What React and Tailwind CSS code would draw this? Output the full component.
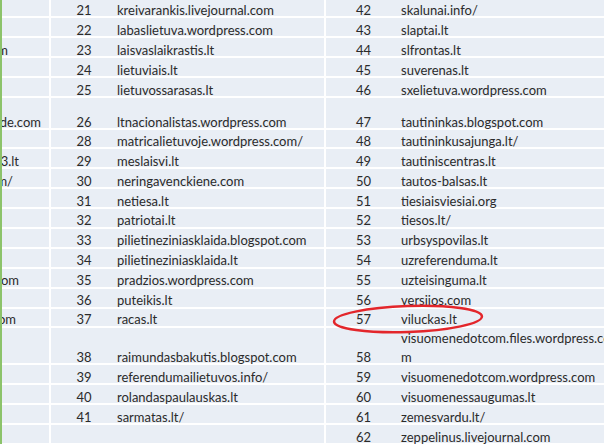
const rows = [
  { h: "h-[18px]", a: "", ap: "", b: "21", bt: "kreivarankis.livejournal.com", c: "42", ct: "skalunai.info/" },
  { h: "h-[20px]", a: "", ap: "", b: "22", bt: "labaslietuva.wordpress.com", c: "43", ct: "slaptai.lt" },
  { h: "h-[20px]", a: "m", ap: "pr-[41px]", b: "23", bt: "laisvaslaikrastis.lt", c: "44", ct: "slfrontas.lt" },
  { h: "h-[20px]", a: "", ap: "", b: "24", bt: "lietuviais.lt", c: "45", ct: "suverenas.lt" },
  { h: "h-[20px]", a: "", ap: "", b: "25", bt: "lietuvossarasas.lt", c: "46", ct: "sxelietuva.wordpress.com" },
  { h: "h-[32px]", a: "de.com", ap: "pr-[8px]", b: "26", bt: "ltnacionalistas.wordpress.com", c: "47", ct: "tautininkas.blogspot.com" },
  { h: "h-[19px]", a: "", ap: "", b: "28", bt: "matricalietuvoje.wordpress.com/", c: "48", ct: "tautininkusajunga.lt/" },
  { h: "h-[20px]", a: "3.lt", ap: "pr-[30px]", b: "29", bt: "meslaisvi.lt", c: "49", ct: "tautiniscentras.lt" },
  { h: "h-[20px]", a: "m/", ap: "pr-[36px]", b: "30", bt: "neringavenckiene.com", c: "50", ct: "tautos-balsas.lt" },
  { h: "h-[20px]", a: "", ap: "", b: "31", bt: "netiesa.lt", c: "51", ct: "tiesiaisviesiai.org" },
  { h: "h-[20px]", a: "", ap: "", b: "32", bt: "patriotai.lt", c: "52", ct: "tiesos.lt/", up: true },
  { h: "h-[20px]", a: "", ap: "", b: "33", bt: "pilietineziniasklaida.blogspot.com", c: "53", ct: "urbsyspovilas.lt", up: true },
  { h: "h-[20px]", a: "", ap: "", b: "34", bt: "pilietineziniasklaida.lt", c: "54", ct: "uzreferenduma.lt", up: true },
  { h: "h-[20px]", a: "com", ap: "pr-[30px]", b: "35", bt: "pradzios.wordpress.com", c: "55", ct: "uzteisinguma.lt", up: true },
  { h: "h-[20px]", a: "", ap: "", b: "36", bt: "puteikis.lt", c: "56", ct: "versijos.com", up: true },
  { h: "h-[19px]", a: "com", ap: "pr-[33px]", b: "37", bt: "racas.lt", c: "57", ct: "viluckas.lt", up: true },
  { h: "h-[37px]", a: "", ap: "", b: "38", bt: "raimundasbakutis.blogspot.com", c: "58", ct: "visuomenedotcom.files.wordpress.co", ct2: "m" },
  { h: "h-[20px]", a: "", ap: "", b: "39", bt: "referendumailietuvos.info/", c: "59", ct: "visuomenedotcom.wordpress.com" },
  { h: "h-[20px]", a: "", ap: "", b: "40", bt: "rolandaspaulauskas.lt", c: "60", ct: "visuomenessaugumas.lt" },
  { h: "h-[20px]", a: "", ap: "", b: "41", bt: "sarmatas.lt/", c: "61", ct: "zemesvardu.lt/" },
  { h: "h-[20px]", a: "", ap: "", b: "", bt: "", c: "62", ct: "zeppelinus.livejournal.com" },
];

function Row({ r }) {
  const cell = `flex items-end leading-[12px] whitespace-nowrap ${r.up ? "pb-[1px]" : ""}`;
  return (
    <div className={`grid grid-cols-[51px_66px_209px_75px_1fr] border-b-2 border-white ${r.h}`}>
      <div className={`${cell} justify-end border-r-2 border-white ${r.ap}`}>{r.a}</div>
      <div className={`${cell} justify-center`}>{r.b}</div>
      <div className={`${cell} border-r-2 border-white`}>{r.bt}</div>
      <div className={`${cell} justify-center`}>{r.c}</div>
      {r.ct2 ? (
        <div className="flex flex-col justify-end leading-[12px] whitespace-nowrap">
          <div className="mb-[7px]">{r.ct}</div>
          <div>{r.ct2}</div>
        </div>
      ) : (
        <div className={cell}>{r.ct}</div>
      )}
    </div>
  );
}

export default function App() {
  return (
    <div className="relative w-[604px] h-[444px] overflow-hidden bg-[#e9eef5] text-[#2b2b2b] text-[13px] font-['Lato',sans-serif]">
      <div className="absolute left-0 top-0 h-full w-[2px] bg-[#8cc36a]" />
      <div className="flex flex-col">
        {rows.map((r, i) => (
          <Row key={i} r={r} />
        ))}
      </div>
      <svg className="absolute left-0 top-0" width="604" height="444">
        <ellipse cx="408" cy="319" rx="74" ry="13" fill="none" stroke="#e3262b" strokeWidth="2.5" transform="rotate(-2 408 319)" />
      </svg>
    </div>
  );
}
